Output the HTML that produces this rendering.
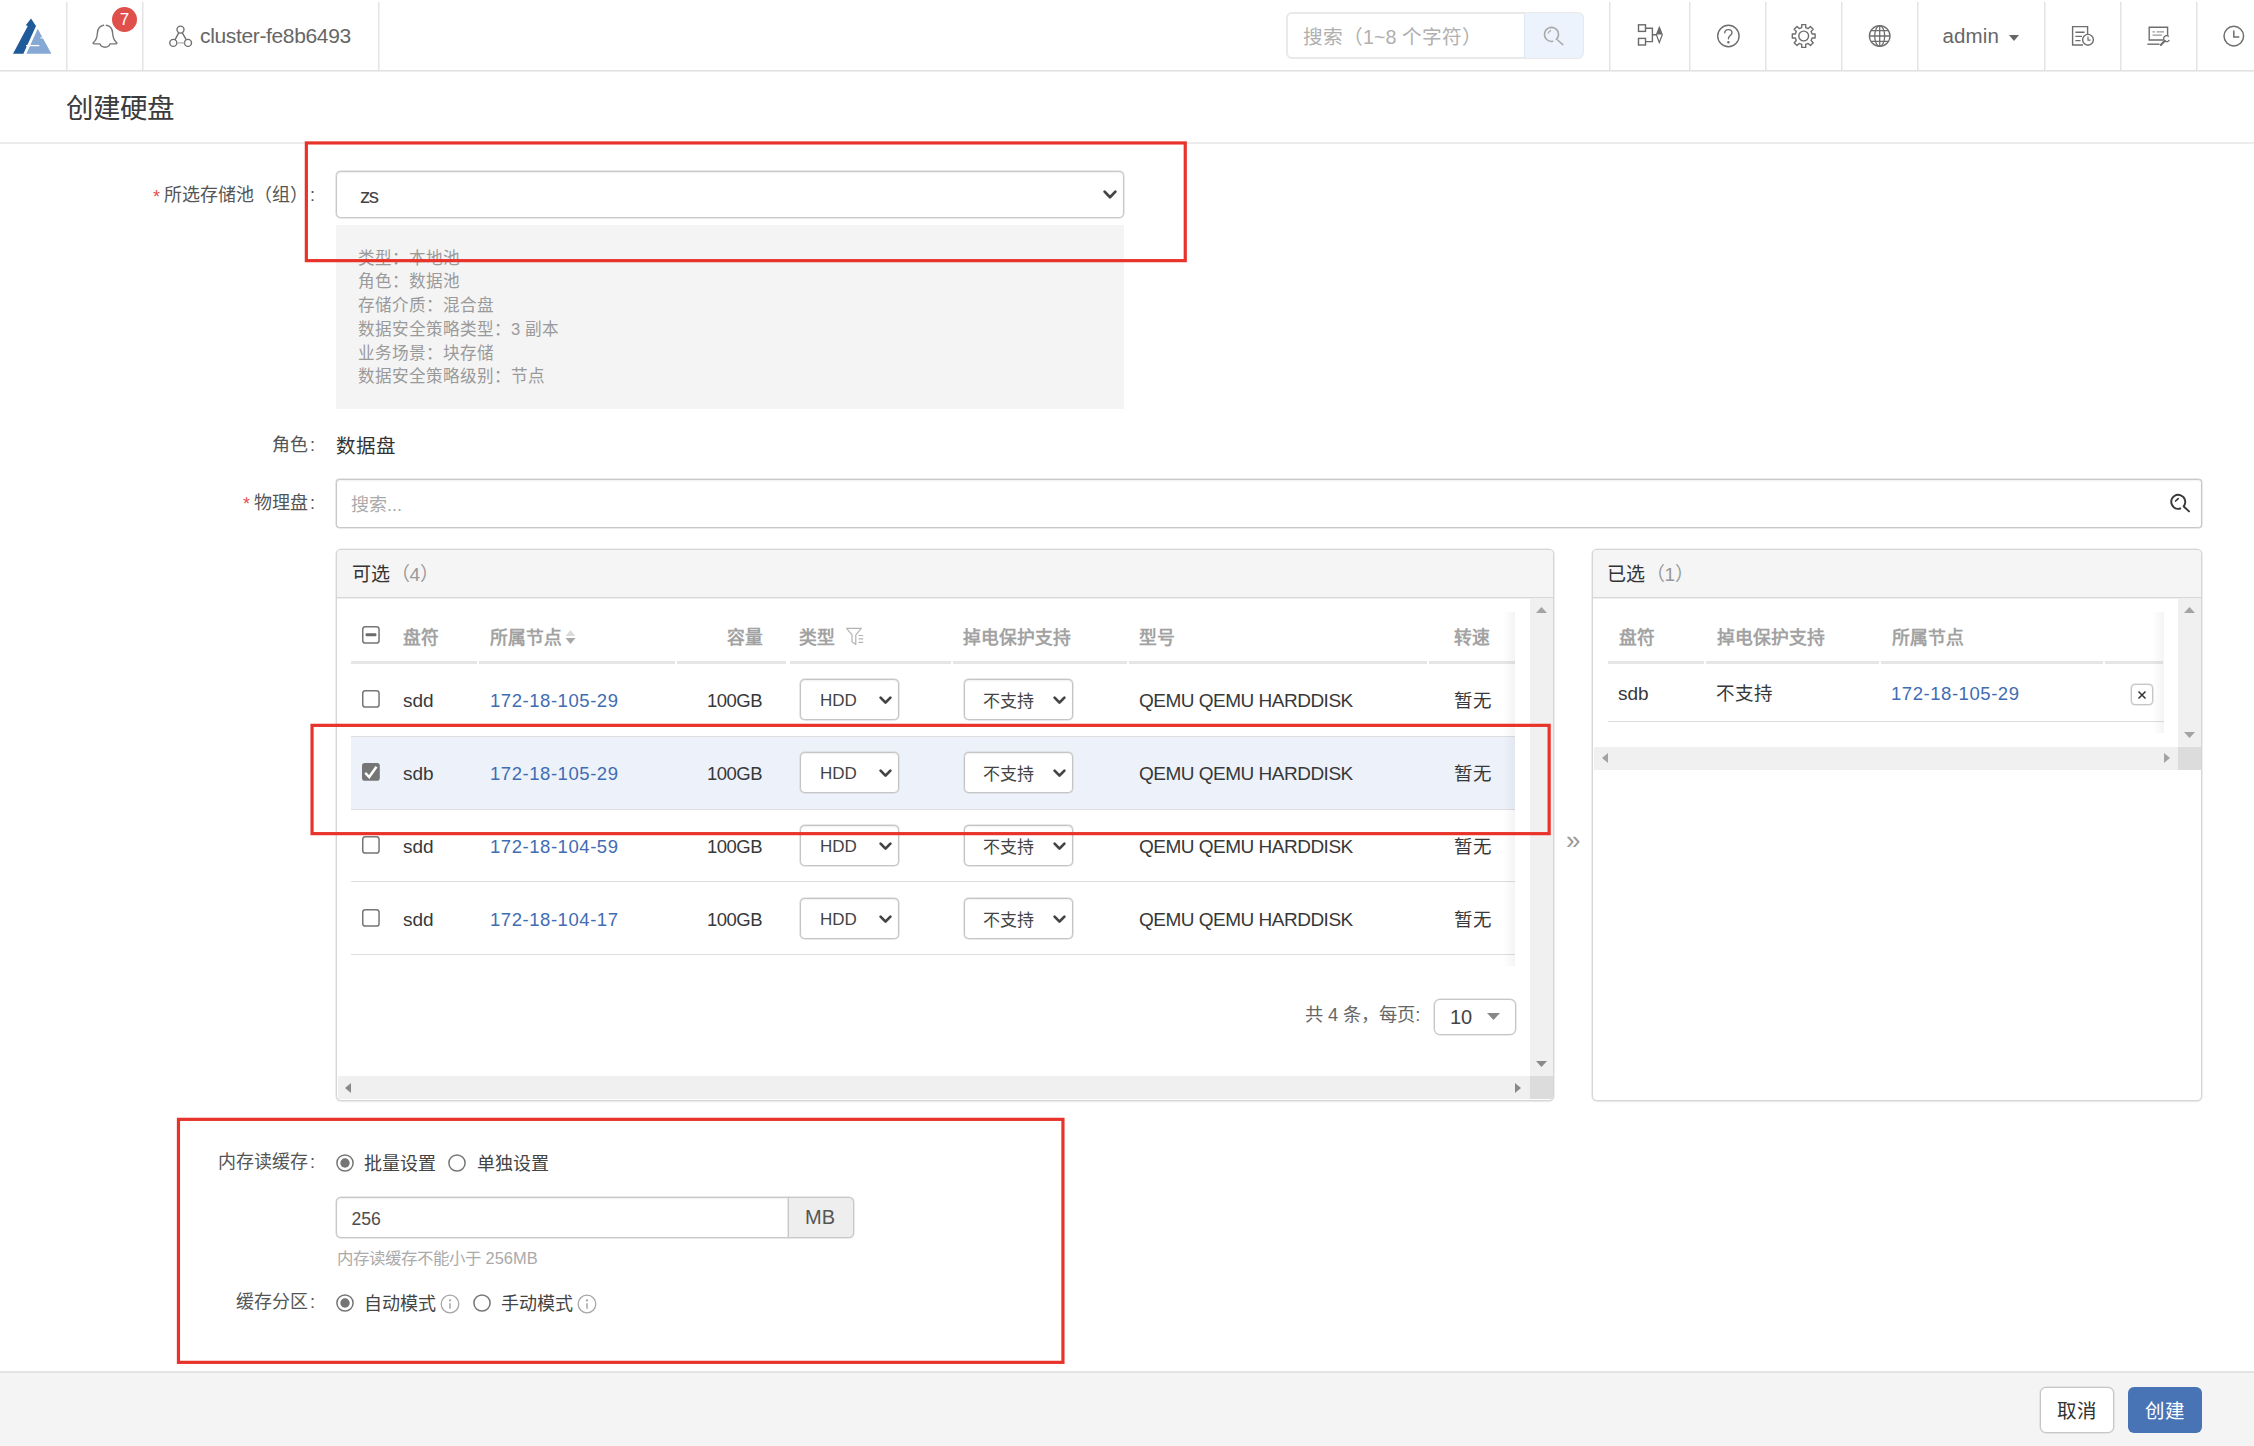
<!DOCTYPE html>
<html lang="zh-CN">
<head>
<meta charset="utf-8">
<title>创建硬盘</title>
<style>
*{box-sizing:border-box;margin:0;padding:0}
html,body{width:2254px;height:1446px;overflow:hidden;background:#fff}
body{position:relative;font-family:"Liberation Sans",sans-serif;font-size:18px;color:#333;-webkit-font-smoothing:antialiased}
.a{position:absolute;white-space:nowrap}
.vsep{position:absolute;top:2px;width:2px;height:68px;background:linear-gradient(to right,#e4e4e4 50%,#f1f1f1 50%)}
.lbl{position:absolute;white-space:nowrap;text-align:right;font-size:18px;color:#555;line-height:24px;height:24px;margin-top:1.5px;margin-left:-1px}
.lbl i{font-style:normal;margin-left:2px}
.req{color:#e0524c;margin-right:4px;position:relative;top:2.5px}
.box{position:absolute;background:#fff;border:1px solid #c8c8c8;border-radius:4.5px}
.redbox{position:absolute;border:3px solid #e63a30;pointer-events:none}
.gray{color:#999}
.link,.td.link{color:#3f6cb3}
svg{position:absolute;overflow:visible}
/* top bar */
#topbar{position:absolute;left:0;top:0;width:2254px;height:72px;background:#fff}
#topbar:after{content:"";position:absolute;left:0;top:70px;width:2254px;height:2px;background:linear-gradient(to bottom,#e2e2e2 50%,#ededed 50%)}
#title{position:absolute;left:66px;top:90px;font-size:27.5px;line-height:38px;color:#3c3c3c}
#titleline{position:absolute;left:0;top:142px;width:2254px;height:2px;background:#ececec}
/* panels */
.panel{position:absolute;background:#fff;border:1px solid #d6d6d6;border-radius:5px;box-shadow:0 0 0 .5px #e2e2e2,0 1px 2px rgba(0,0,0,.07)}
.phead{position:absolute;left:0;top:0;right:0;height:48px;background:#f5f5f5;border-bottom:1px solid #d6d6d6;box-shadow:0 .5px 0 #e2e2e2;border-radius:4px 4px 0 0}
.th{position:absolute;white-space:nowrap;font-weight:bold;color:#a2a2a2;font-size:17.8px;line-height:24px}
.thb{position:absolute;height:3px;background:#e6e6e6}
.td{position:absolute;white-space:nowrap;font-size:19px;line-height:24px;color:#383838;margin-top:1.5px}
.rowline{position:absolute;height:1px;background:#dedede}
.cb{position:absolute;width:19px;height:19px;border:2px solid #767676;border-radius:4px;background:#fff}
.sel{position:absolute;height:41px;border:1px solid #c4c4c4;border-radius:4.5px;background:#fff;box-shadow:0 0 0 .5px #d2d2d2,inset 0 1px 2px rgba(0,0,0,.06)}
.sb{position:absolute;background:#f0f0f0}
.sbc{position:absolute;background:#dcdcdc}
.radio{position:absolute;width:19px;height:19px;border:2px solid #767676;border-radius:50%;background:#fff}
.radio.on:after{content:"";position:absolute;left:3px;top:3px;width:9px;height:9px;border-radius:50%;background:#666}
</style>
</head>
<body>

<!-- ================= TOP BAR ================= -->
<div id="topbar">
  <div class="vsep" style="left:66px"></div>
  <div class="vsep" style="left:142px"></div>
  <div class="vsep" style="left:378px"></div>
  <div class="vsep" style="left:1609px"></div>
  <div class="vsep" style="left:1689px"></div>
  <div class="vsep" style="left:1765px"></div>
  <div class="vsep" style="left:1841px"></div>
  <div class="vsep" style="left:1917px"></div>
  <div class="vsep" style="left:2044px"></div>
  <div class="vsep" style="left:2120px"></div>
  <div class="vsep" style="left:2196px"></div>

  <svg style="left:0;top:0" width="70" height="72" viewBox="0 0 70 72">
<polygon points="13,53.7 23.4,53.7 36,26 31,18.4 25.8,25.3 27.8,26" fill="#1f5a9a"/>
<polygon points="26.4,53.7 51.4,53.7 37.7,28.8" fill="#86a8d5"/>
<path d="M40.5 37.8 L47 37.8" stroke="#fff" stroke-width="1.2"/>
<path d="M26 45.6 L39.3 45.6" stroke="#fff" stroke-width="1.3"/>
<path d="M27.2 48.5 L37.6 26.5" stroke="#fff" stroke-width="1.1"/>
</svg>
  <svg style="left:88px;top:20px" width="34" height="32" viewBox="88 20 34 32">
<path d="M103.6 25.3 C99.5 26 97.6 29.5 97.4 33 C97.2 37 96.4 40.2 93.4 42.6 C92.8 43.2 93.2 43.9 94 43.9 L100 43.9 C100.6 46 102.4 47.2 105 47.2 C107.6 47.2 109.4 46 110 43.9 L116 43.9 C116.8 43.9 117.2 43.2 116.6 42.6 C113.6 40.2 112.8 37 112.6 33 C112.4 29.5 110.5 26 106.4 25.3" fill="none" stroke="#777" stroke-width="1.4" stroke-linecap="round" stroke-linejoin="round"/>
</svg>
  <div class="a" style="left:112px;top:7px;width:25px;height:25px;border-radius:50%;background:#e0504a;color:#fff;font-size:17px;line-height:25px;text-align:center">7</div>
  <svg style="left:166px;top:22px" width="30" height="28" viewBox="166 22 30 28">
<g fill="none" stroke="#6e6e6e" stroke-width="1.4">
<circle cx="180.5" cy="29.6" r="3.5"/><circle cx="173.3" cy="42.9" r="3.5"/><circle cx="188" cy="42.9" r="3.5"/>
<path d="M178.8 32.7 L175 39.8 M182.2 32.7 L186.3 39.8"/>
<path d="M176.8 42.9 L184.5 42.9" stroke="#bbb"/>
</g></svg>
  <div class="a" id="cluster" style="left:200px;top:22px;font-size:21px;line-height:28px;color:#666;letter-spacing:-0.35px">cluster-fe8b6493</div>

  <!-- search -->
  <div class="a" style="left:1286px;top:12px;width:298px;height:47px;border:2px solid #e9e9e9;border-radius:6px;background:#fff"></div>
  <div class="a" style="left:1524px;top:13px;width:59px;height:45px;background:#ecf3fc;border-left:1px solid #dde6f2;border-radius:0 5px 5px 0"></div>
  <div class="a" id="srch" style="left:1303px;top:22.5px;font-size:19.7px;line-height:28px;color:#b0b0b0">搜索（1~8 个字符）</div>
  <svg style="left:1500px;top:0" width="754" height="72" viewBox="1500 0 754 72">
<!-- search -->
<g fill="none" stroke="#a9a9a9" stroke-width="1.5" stroke-linecap="round">
<path d="M1556.3 39.5 A7 7 0 1 0 1552.8 41.3"/>
<path d="M1557.6 40 L1562.8 44.6"/>
<path d="M1548.2 33.2 A4 4 0 0 1 1550.6 30.6" stroke-width="1.2"/>
</g>
<!-- flow icon -->
<g fill="none" stroke="#6a6a6a" stroke-width="1.4">
<rect x="1638.5" y="24.8" width="7" height="6.6"/><rect x="1638.5" y="38.4" width="7" height="6.6"/>
<path d="M1645.5 28.2 L1652.4 28.2 L1652.4 41.6 L1645.5 41.6 M1652.4 34.8 L1656.5 34.8"/>
<path d="M1659.3 27.3 L1662.3 34.8 L1659.3 42.5 L1656.4 34.8 Z" stroke-width="1.2"/>
<path d="M1659.3 27 L1662.3 34.5 L1656.4 34.5 Z" fill="#6a6a6a" stroke="none"/>
</g>
<!-- help -->
<g fill="none" stroke="#6e6e6e" stroke-width="1.4" stroke-linecap="round">
<circle cx="1728.4" cy="36" r="10.7"/>
<path d="M1724.8 32.8 C1724.8 28.6 1732 28.6 1732 32.8 C1732 35.6 1728.4 35.6 1728.4 38.8"/>
<circle cx="1728.4" cy="42.2" r="0.6" fill="#6e6e6e"/>
</g>
<!-- gear -->
<g fill="none" stroke="#6e6e6e" stroke-width="1.4" stroke-linejoin="round">
<path d="M1801.7 27.6 L1801.7 24.6 L1805.7 24.6 L1805.7 27.6 L1808.2 28.6 L1810.4 26.5 L1813.2 29.3 L1811.1 31.5 L1812.1 34.0 L1815.1 34.0 L1815.1 38.0 L1812.1 38.0 L1811.1 40.5 L1813.2 42.7 L1810.4 45.5 L1808.2 43.4 L1805.7 44.4 L1805.7 47.4 L1801.7 47.4 L1801.7 44.4 L1799.2 43.4 L1797.0 45.5 L1794.2 42.7 L1796.3 40.5 L1795.3 38.0 L1792.3 38.0 L1792.3 34.0 L1795.3 34.0 L1796.3 31.5 L1794.2 29.3 L1797.0 26.5 L1799.2 28.6Z"/>
<circle cx="1803.7" cy="36" r="4.9"/>
</g>
<!-- globe -->
<g fill="none" stroke="#6e6e6e" stroke-width="1.3">
<circle cx="1879.7" cy="36" r="10.3"/>
<ellipse cx="1879.7" cy="36" rx="5" ry="10.3"/>
<path d="M1879.7 25.7 L1879.7 46.3 M1869.4 36 L1890 36 M1871 30.6 L1888.4 30.6 M1871 41.4 L1888.4 41.4"/>
</g>
<!-- doc clock -->
<g fill="none" stroke="#6e6e6e" stroke-width="1.4">
<path d="M2087.6 35 L2087.6 26.6 L2072.6 26.6 L2072.6 45 L2083 45"/>
<path d="M2075.4 32.3 L2084.6 32.3 M2075.4 36.4 L2082 36.4 M2075.4 40.6 L2080.5 40.6"/>
<circle cx="2088" cy="39.8" r="5.4" fill="#fff"/>
<path d="M2088 36.6 L2088 40.2 L2090.6 40.2" stroke-width="1.2"/>
</g>
<!-- monitor wrench -->
<g fill="none" stroke="#6e6e6e" stroke-width="1.4">
<path d="M2163 40 L2149.2 40 L2149.2 27.2 L2167.6 27.2 L2167.6 35.5"/>
<path d="M2147.4 44.2 L2159.5 44.2"/>
<path d="M2152.5 31.8 L2155 31.8 M2156.6 31.8 L2164 31.8 M2152.5 35.2 L2162 35.2" stroke="#999" stroke-width="1.2"/>
<path d="M2160.8 45 L2164.8 40.8" stroke-width="2" stroke-linecap="round"/>
<path d="M2168.8 36.6 A3 3 0 1 0 2169.3 40" stroke-width="1.3"/>
</g>
<!-- clock -->
<g fill="none" stroke="#6e6e6e" stroke-width="1.5">
<circle cx="2233.8" cy="36.1" r="9.8"/>
<path d="M2233.8 30.6 L2233.8 36.9 L2239.3 36.9"/>
</g>
</svg>
  <div class="a" id="admin" style="left:1942.5px;top:21.5px;font-size:20.5px;line-height:28px;color:#666;letter-spacing:.15px">admin</div>
  <div class="a" style="left:2009px;top:35px;width:0;height:0;border-left:5px solid transparent;border-right:5px solid transparent;border-top:6px solid #666"></div>
</div>

<div id="title">创建硬盘</div>
<div id="titleline"></div>

<!-- ================= FORM TOP ================= -->
<div class="lbl" id="l1" style="left:100px;width:216px;top:181px"><span class="req">*</span>所选存储池（组）<i>:</i></div>
<div class="box" style="left:336px;top:171px;width:788px;height:47px;box-shadow:0 0 0 .5px #d4d4d4,inset 0 1px 2px rgba(0,0,0,.06)"></div>
<div class="a" id="zs" style="left:360px;top:183.5px;font-size:20.5px;letter-spacing:-1.4px;line-height:24px;color:#444">zs</div>
<svg style="left:1103.3px;top:190px" width="14" height="10" viewBox="0 0 14 10"><path d="M1.6 1.6 L7 7.2 L12.4 1.6" fill="none" stroke="#444" stroke-width="2.7" stroke-linecap="round" stroke-linejoin="round"/></svg>

<div class="a" style="left:336px;top:225px;width:788px;height:184px;background:#f4f4f4"></div>
<div class="a gray" id="info" style="left:358px;top:246.5px;font-size:16.6px;line-height:23.8px;color:#9a9a9a;white-space:normal;width:600px">类型：本地池<br>角色：数据池<br>存储介质：混合盘<br>数据安全策略类型：3 副本<br>业务场景：块存储<br>数据安全策略级别：节点</div>

<div class="lbl" id="l2" style="left:100px;width:216px;top:431px">角色<i>:</i></div>
<div class="a" id="v2" style="left:336px;top:433.5px;font-size:19.5px;line-height:24px;color:#333">数据盘</div>

<div class="lbl" id="l3" style="left:100px;width:216px;top:489px"><span class="req" style="top:1px">*</span>物理盘<i>:</i></div>
<div class="box" style="border-radius:3.5px;left:336px;top:479px;width:1866px;height:49px;box-shadow:0 0 0 .5px #d4d4d4,inset 0 1px 2px rgba(0,0,0,.06)"></div>
<div class="a" id="ph" style="left:351px;top:492.5px;font-size:18px;line-height:24px;color:#aaa">搜索...</div>
<svg style="left:2165px;top:490px" width="30" height="26" viewBox="2165 490 30 26">
<g fill="none" stroke="#383838" stroke-width="1.9" stroke-linecap="round">
<path d="M2183.6 506.3 A7 7 0 1 0 2180.3 508.5"/>
<path d="M2184 506.8 L2189 511.4"/>
<path d="M2175.6 501 L2178.2 498.6" stroke-width="1.7"/>
</g></svg>

<!-- ================= LEFT PANEL ================= -->
<div class="panel" style="left:336px;top:549px;width:1218px;height:552px">
  <div class="phead"></div>
</div>
<div class="a" id="ph1" style="left:352px;top:563px;font-size:19px;line-height:24px;color:#333">可选<span style="color:#999;margin-left:0.5px">（4）</span></div>

<!-- scrollbars left -->
<div class="sb" style="left:1530px;top:599px;width:23px;height:478px"></div>
<div class="sb" style="left:338px;top:1076px;width:1192px;height:23px"></div>
<div class="sbc" style="left:1530px;top:1076px;width:23px;height:23px;border-radius:0 0 3px 0"></div>
<svg style="left:1536px;top:607px" width="11" height="6" viewBox="0 0 11 6"><path d="M0 6 L5.5 0 L11 6Z" fill="#a3a3a3"/></svg>
<svg style="left:1536px;top:1061px" width="11" height="6" viewBox="0 0 11 6"><path d="M0 0 L5.5 6 L11 0Z" fill="#8a8a8a"/></svg>
<svg style="left:345px;top:1083px" width="6" height="10" viewBox="0 0 6 10"><path d="M6 0 L0 5 L6 10Z" fill="#8a8a8a"/></svg>
<svg style="left:1515px;top:1083px" width="6" height="10" viewBox="0 0 6 10"><path d="M0 0 L6 5 L0 10Z" fill="#8a8a8a"/></svg>

<!-- selected row bg -->
<div class="a" style="left:351px;top:737px;width:1164px;height:72px;background:#edf2fa"></div>

<!-- header -->
<svg style="left:362px;top:625.6px" width="18" height="18" viewBox="0 0 18 18"><rect x="0.75" y="0.75" width="16.3" height="16.3" rx="2.6" fill="#fff" stroke="#767676" stroke-width="1.5"/><rect x="3.6" y="7.3" width="10.8" height="2.9" rx="1" fill="#6a6a6a"/></svg>
<div class="th" style="left:403px;top:626px">盘符</div>
<div class="th" style="left:490px;top:626px">所属节点</div>
<svg style="left:565px;top:630px" width="11" height="14" viewBox="0 0 11 14"><path d="M0.5 6 L5.5 0 L10.5 6Z" fill="#dcdcdc"/><path d="M0.5 8 L5.5 14 L10.5 8Z" fill="#a8a8a8"/></svg>
<div class="th" style="left:727px;top:626px">容量</div>
<div class="th" style="left:799px;top:626px">类型</div>
<svg style="left:844px;top:626px" width="22" height="20" viewBox="844 626 22 20">
<g fill="none" stroke="#b4b4b4" stroke-width="1.2" stroke-linejoin="round">
<path d="M846.6 628.4 L861.3 628.4 L855.8 634.8 L855.8 644.4 L852 641.8 L852 634.8 Z"/>
<path d="M858.6 635.5 L863.2 635.5 M858.6 638.9 L863.2 638.9 M858.6 642.3 L863.2 642.3"/>
</g></svg>
<div class="th" style="left:963px;top:626px">掉电保护支持</div>
<div class="th" style="left:1139px;top:626px">型号</div>
<div class="th" style="left:1454px;top:626px">转速</div>
<div class="thb" style="left:351px;top:661px;width:126px"></div>
<div class="thb" style="left:479px;top:661px;width:196px"></div>
<div class="thb" style="left:677px;top:661px;width:109px"></div>
<div class="thb" style="left:790px;top:661px;width:161px"></div>
<div class="thb" style="left:953px;top:661px;width:174px"></div>
<div class="thb" style="left:1129px;top:661px;width:298px"></div>
<div class="thb" style="left:1429px;top:661px;width:86px"></div>

<!-- row lines -->
<div class="rowline" style="left:351px;top:736px;width:1164px"></div>
<div class="rowline" style="left:351px;top:809px;width:1164px"></div>
<div class="rowline" style="left:351px;top:881px;width:1164px"></div>
<div class="rowline" style="left:351px;top:954px;width:1164px"></div>

<!-- rows -->
<div id="rows">
<svg style="left:362px;top:690.1px" width="18" height="18" viewBox="0 0 18 18"><rect x="0.75" y="0.75" width="16.3" height="16.3" rx="2.6" fill="#fff" stroke="#767676" stroke-width="1.5"/></svg>
<div class="td c1" style="left:403px;top:687px">sdd</div>
<div class="td link c2" style="left:490px;top:687px;letter-spacing:.55px;font-size:18.5px">172-18-105-29</div>
<div class="td c3" style="font-size:18.5px;letter-spacing:-.5px;left:662px;width:100px;text-align:right;top:687px">100GB</div>
<div class="sel" style="left:800px;top:679px;width:99px"></div>
<div class="td c4" style="left:820px;top:687.5px;font-size:17px;color:#444">HDD</div>
<svg style="left:878.7px;top:696.3px" width="13" height="9" viewBox="0 0 13 9"><path d="M1.6 1.6 L6.5 6.6 L11.4 1.6" fill="none" stroke="#444" stroke-width="2.7" stroke-linecap="round" stroke-linejoin="round"/></svg>
<div class="sel" style="left:964px;top:679px;width:109px"></div>
<div class="td c5" style="left:983px;top:688px;font-size:17px;color:#444">不支持</div>
<svg style="left:1052.7px;top:696.3px" width="13" height="9" viewBox="0 0 13 9"><path d="M1.6 1.6 L6.5 6.6 L11.4 1.6" fill="none" stroke="#444" stroke-width="2.7" stroke-linecap="round" stroke-linejoin="round"/></svg>
<div class="td c6" style="letter-spacing:-.5px;left:1139px;top:687px">QEMU QEMU HARDDISK</div>
<div class="td c7" style="font-size:18.5px;left:1454px;top:687px">暂无</div>
<svg style="left:362px;top:763.1px" width="18" height="18" viewBox="0 0 18 18"><rect x="0" y="0" width="17.8" height="17.8" rx="2.8" fill="#757575"/><path d="M3.2 9.9 L7.2 14 L14.5 3.8" fill="none" stroke="#fff" stroke-width="2.5"/></svg>
<div class="td c1" style="left:403px;top:760px">sdb</div>
<div class="td link c2" style="left:490px;top:760px;letter-spacing:.55px;font-size:18.5px">172-18-105-29</div>
<div class="td c3" style="font-size:18.5px;letter-spacing:-.5px;left:662px;width:100px;text-align:right;top:760px">100GB</div>
<div class="sel" style="left:800px;top:752px;width:99px"></div>
<div class="td c4" style="left:820px;top:760.5px;font-size:17px;color:#444">HDD</div>
<svg style="left:878.7px;top:769.3px" width="13" height="9" viewBox="0 0 13 9"><path d="M1.6 1.6 L6.5 6.6 L11.4 1.6" fill="none" stroke="#444" stroke-width="2.7" stroke-linecap="round" stroke-linejoin="round"/></svg>
<div class="sel" style="left:964px;top:752px;width:109px"></div>
<div class="td c5" style="left:983px;top:761px;font-size:17px;color:#444">不支持</div>
<svg style="left:1052.7px;top:769.3px" width="13" height="9" viewBox="0 0 13 9"><path d="M1.6 1.6 L6.5 6.6 L11.4 1.6" fill="none" stroke="#444" stroke-width="2.7" stroke-linecap="round" stroke-linejoin="round"/></svg>
<div class="td c6" style="letter-spacing:-.5px;left:1139px;top:760px">QEMU QEMU HARDDISK</div>
<div class="td c7" style="font-size:18.5px;left:1454px;top:760px">暂无</div>
<svg style="left:362px;top:836.1px" width="18" height="18" viewBox="0 0 18 18"><rect x="0.75" y="0.75" width="16.3" height="16.3" rx="2.6" fill="#fff" stroke="#767676" stroke-width="1.5"/></svg>
<div class="td c1" style="left:403px;top:833px">sdd</div>
<div class="td link c2" style="left:490px;top:833px;letter-spacing:.55px;font-size:18.5px">172-18-104-59</div>
<div class="td c3" style="font-size:18.5px;letter-spacing:-.5px;left:662px;width:100px;text-align:right;top:833px">100GB</div>
<div class="sel" style="left:800px;top:825px;width:99px"></div>
<div class="td c4" style="left:820px;top:833.5px;font-size:17px;color:#444">HDD</div>
<svg style="left:878.7px;top:842.3px" width="13" height="9" viewBox="0 0 13 9"><path d="M1.6 1.6 L6.5 6.6 L11.4 1.6" fill="none" stroke="#444" stroke-width="2.7" stroke-linecap="round" stroke-linejoin="round"/></svg>
<div class="sel" style="left:964px;top:825px;width:109px"></div>
<div class="td c5" style="left:983px;top:834px;font-size:17px;color:#444">不支持</div>
<svg style="left:1052.7px;top:842.3px" width="13" height="9" viewBox="0 0 13 9"><path d="M1.6 1.6 L6.5 6.6 L11.4 1.6" fill="none" stroke="#444" stroke-width="2.7" stroke-linecap="round" stroke-linejoin="round"/></svg>
<div class="td c6" style="letter-spacing:-.5px;left:1139px;top:833px">QEMU QEMU HARDDISK</div>
<div class="td c7" style="font-size:18.5px;left:1454px;top:833px">暂无</div>
<svg style="left:362px;top:909.1px" width="18" height="18" viewBox="0 0 18 18"><rect x="0.75" y="0.75" width="16.3" height="16.3" rx="2.6" fill="#fff" stroke="#767676" stroke-width="1.5"/></svg>
<div class="td c1" style="left:403px;top:906px">sdd</div>
<div class="td link c2" style="left:490px;top:906px;letter-spacing:.55px;font-size:18.5px">172-18-104-17</div>
<div class="td c3" style="font-size:18.5px;letter-spacing:-.5px;left:662px;width:100px;text-align:right;top:906px">100GB</div>
<div class="sel" style="left:800px;top:898px;width:99px"></div>
<div class="td c4" style="left:820px;top:906.5px;font-size:17px;color:#444">HDD</div>
<svg style="left:878.7px;top:915.3px" width="13" height="9" viewBox="0 0 13 9"><path d="M1.6 1.6 L6.5 6.6 L11.4 1.6" fill="none" stroke="#444" stroke-width="2.7" stroke-linecap="round" stroke-linejoin="round"/></svg>
<div class="sel" style="left:964px;top:898px;width:109px"></div>
<div class="td c5" style="left:983px;top:907px;font-size:17px;color:#444">不支持</div>
<svg style="left:1052.7px;top:915.3px" width="13" height="9" viewBox="0 0 13 9"><path d="M1.6 1.6 L6.5 6.6 L11.4 1.6" fill="none" stroke="#444" stroke-width="2.7" stroke-linecap="round" stroke-linejoin="round"/></svg>
<div class="td c6" style="letter-spacing:-.5px;left:1139px;top:906px">QEMU QEMU HARDDISK</div>
<div class="td c7" style="font-size:18.5px;left:1454px;top:906px">暂无</div>
</div>

<!-- right fade of table -->
<div class="a" style="left:1503px;top:612px;width:12px;height:354px;background:linear-gradient(to right,rgba(0,0,0,0),rgba(0,0,0,.045))"></div>

<!-- pagination -->
<div class="a" id="pg" style="left:1305px;top:1003px;font-size:18.3px;line-height:24px;color:#666">共 4 条，每页:</div>
<div class="a" style="left:1433.5px;top:999px;width:82px;height:36px;border:1px solid #c6c6c6;border-radius:6px;background:#fff;box-shadow:0 0 0 .5px #d4d4d4"></div>
<div class="a" id="pg10" style="left:1450px;top:1005px;font-size:20px;line-height:24px;color:#444">10</div>
<svg style="left:1487px;top:1013px" width="13" height="7" viewBox="0 0 13 7"><path d="M0 0 L6.5 7 L13 0Z" fill="#888"/></svg>

<!-- transfer arrow -->
<div class="a" id="raquo" style="left:1566px;top:826px;font-size:26px;line-height:28px;color:#999">»</div>

<!-- ================= RIGHT PANEL ================= -->
<div class="panel" style="left:1592px;top:549px;width:610px;height:552px">
  <div class="phead"></div>
</div>
<div class="a" id="ph2" style="left:1607px;top:563px;font-size:19px;line-height:24px;color:#333">已选<span style="color:#999;margin-left:0.5px">（1）</span></div>

<div class="sb" style="left:2178px;top:599px;width:23px;height:148px"></div>
<div class="sb" style="left:1594px;top:747px;width:584px;height:23px"></div>
<div class="sbc" style="left:2178px;top:747px;width:23px;height:23px"></div>
<svg style="left:2184px;top:607px" width="11" height="6" viewBox="0 0 11 6"><path d="M0 6 L5.5 0 L11 6Z" fill="#a3a3a3"/></svg>
<svg style="left:2184px;top:732px" width="11" height="6" viewBox="0 0 11 6"><path d="M0 0 L5.5 6 L11 0Z" fill="#a3a3a3"/></svg>
<svg style="left:1602px;top:753px" width="6" height="10" viewBox="0 0 6 10"><path d="M6 0 L0 5 L6 10Z" fill="#a3a3a3"/></svg>
<svg style="left:2164px;top:753px" width="6" height="10" viewBox="0 0 6 10"><path d="M0 0 L6 5 L0 10Z" fill="#a3a3a3"/></svg>

<div class="th" style="left:1619px;top:626px">盘符</div>
<div class="th" style="left:1717px;top:626px">掉电保护支持</div>
<div class="th" style="left:1892px;top:626px">所属节点</div>
<div class="thb" style="left:1608px;top:661px;width:96px"></div>
<div class="thb" style="left:1706px;top:661px;width:173px"></div>
<div class="thb" style="left:1881px;top:661px;width:222px"></div>
<div class="thb" style="left:2105px;top:661px;width:58px"></div>
<div class="rowline" style="left:1608px;top:721px;width:556px"></div>

<div class="td" id="r_sdb" style="left:1618px;top:680px">sdb</div>
<div class="td" id="r_ns" style="left:1716px;top:680px;font-size:18.5px">不支持</div>
<div class="td link" id="r_ip" style="left:1891px;top:680px;letter-spacing:.55px;font-size:18.5px">172-18-105-29</div>
<div class="a" style="left:2131px;top:683.5px;width:22px;height:21.5px;border:1px solid #c6c6c6;border-radius:4px;background:#fff;box-shadow:0 0 0 .5px #d4d4d4"></div>
<svg style="left:2138px;top:691px" width="8" height="8" viewBox="0 0 8 8"><path d="M0.5 0.5 L7.5 7.5 M7.5 0.5 L0.5 7.5" stroke="#333" stroke-width="1.5" fill="none"/></svg>
<div class="a" style="left:2152px;top:612px;width:12px;height:121px;background:linear-gradient(to right,rgba(0,0,0,0),rgba(0,0,0,.045))"></div>


<!-- ================= BOTTOM FORM ================= -->
<div class="lbl" id="l4" style="left:100px;width:216px;top:1148.5px">内存读缓存<i>:</i></div>
<svg style="left:334.8px;top:1153.3px" width="20" height="20" viewBox="0 0 20 20"><circle cx="10" cy="10" r="8.1" fill="#fff" stroke="#767676" stroke-width="1.5"/><circle cx="10" cy="10" r="4.7" fill="#757575"/></svg>
<div class="a" id="rb1" style="left:364px;top:1152px;font-size:18px;line-height:24px;color:#444">批量设置</div>
<svg style="left:446.8px;top:1153.3px" width="20" height="20" viewBox="0 0 20 20"><circle cx="10" cy="10" r="8.1" fill="#fff" stroke="#767676" stroke-width="1.5"/></svg>
<div class="a" id="rb2" style="left:477px;top:1152px;font-size:18px;line-height:24px;color:#444">单独设置</div>

<div class="a" style="left:336px;top:1197px;width:453px;height:41px;border:1px solid #c8c8c8;border-radius:5px 0 0 5px;background:#fff;box-shadow:0 0 0 .5px #d4d4d4,inset 0 1px 2px rgba(0,0,0,.06)"></div>
<div class="a" style="left:788px;top:1197px;width:66px;height:41px;border:1px solid #c8c8c8;border-radius:0 5px 5px 0;background:#eee;box-shadow:0 0 0 .5px #d4d4d4"></div>
<div class="a" id="v256" style="left:351.5px;top:1206.5px;font-size:17.6px;line-height:24px;color:#4d4d4d">256</div>
<div class="a" id="mb" style="left:805px;top:1205px;font-size:20px;line-height:24px;color:#555">MB</div>
<div class="a" id="help" style="left:337px;top:1245.5px;font-size:16.45px;line-height:24px;color:#aaa">内存读缓存不能小于 256MB</div>

<div class="lbl" id="l5" style="left:100px;width:216px;top:1288.5px">缓存分区<i>:</i></div>
<svg style="left:334.8px;top:1293.3px" width="20" height="20" viewBox="0 0 20 20"><circle cx="10" cy="10" r="8.1" fill="#fff" stroke="#767676" stroke-width="1.5"/><circle cx="10" cy="10" r="4.7" fill="#757575"/></svg>
<div class="a" id="rb3" style="left:364px;top:1292px;font-size:18px;line-height:24px;color:#444">自动模式</div>
<svg style="left:437.7px;top:1292px" width="24" height="24" viewBox="437.7 1292 24 24">
<g fill="none" stroke="#a6a6a6" stroke-width="1.3"><circle cx="449.7" cy="1304" r="8.8"/><path d="M449.7 1303.2 L449.7 1308.8" stroke-width="1.5"/><circle cx="449.7" cy="1300.4" r="0.5" fill="#a6a6a6"/></g></svg>
<svg style="left:471.8px;top:1293.3px" width="20" height="20" viewBox="0 0 20 20"><circle cx="10" cy="10" r="8.1" fill="#fff" stroke="#767676" stroke-width="1.5"/></svg>
<div class="a" id="rb4" style="left:501px;top:1292px;font-size:18px;line-height:24px;color:#444">手动模式</div>
<svg style="left:575.1px;top:1292px" width="24" height="24" viewBox="575.1 1292 24 24">
<g fill="none" stroke="#a6a6a6" stroke-width="1.3"><circle cx="587.1" cy="1304" r="8.8"/><path d="M587.1 1303.2 L587.1 1308.8" stroke-width="1.5"/><circle cx="587.1" cy="1300.4" r="0.5" fill="#a6a6a6"/></g></svg>

<!-- ================= FOOTER ================= -->
<div class="a" style="left:0;top:1371px;width:2254px;height:75px;background:#f4f4f4;border-top:2px solid #e3e3e3"></div>
<div class="a" style="left:2040px;top:1387px;width:74px;height:46px;border:1px solid #c6c6c6;border-radius:6px;background:#fff;box-shadow:0 0 0 .5px #d4d4d4"></div>
<div class="a" id="bcancel" style="left:2040px;width:74px;text-align:center;top:1399px;font-size:19.5px;line-height:24px;color:#333">取消</div>
<div class="a" style="left:2128px;top:1387px;width:74px;height:46px;border-radius:6px;background:#4874b6"></div>
<div class="a" id="bcreate" style="left:2128px;width:74px;text-align:center;top:1399px;font-size:19.5px;line-height:24px;color:#fff">创建</div>


<!--REDBOXES-->
<svg style="left:0;top:0;pointer-events:none" width="2254" height="1446" viewBox="0 0 2254 1446">
<g fill="none" stroke="#e8332a" stroke-width="3.2">
<rect x="306.35" y="142.95" width="878.9" height="117.7"/>
<rect x="312.05" y="725.35" width="1237.1" height="108.3"/>
<rect x="178.45" y="1119.35" width="884.5" height="243"/>
</g></svg>

</body>
</html>
